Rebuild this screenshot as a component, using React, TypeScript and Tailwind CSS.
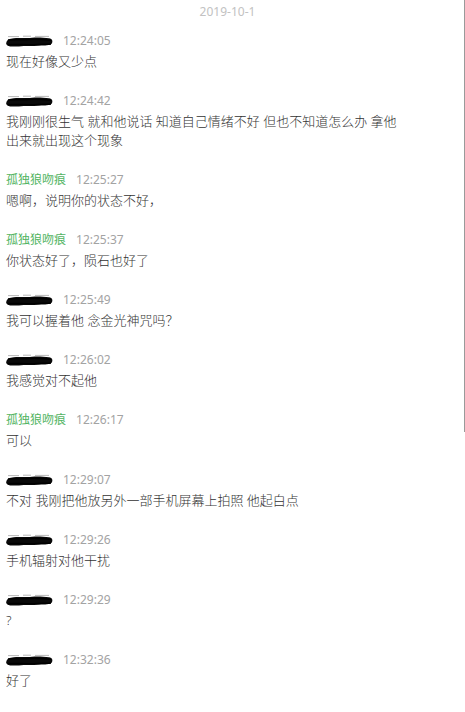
import React from "react";

type Msg = {
  name: string | null; // null = redacted
  time: string;
  lines: string[];
};

const messages: Msg[] = [
  { name: null, time: "12:24:05", lines: ["现在好像又少点"] },
  {
    name: null,
    time: "12:24:42",
    lines: ["我刚刚很生气 就和他说话 知道自己情绪不好 但也不知道怎么办 拿他", "出来就出现这个现象"],
  },
  { name: "孤独狼吻痕", time: "12:25:27", lines: ["嗯啊，说明你的状态不好，"] },
  { name: "孤独狼吻痕", time: "12:25:37", lines: ["你状态好了，陨石也好了"] },
  { name: null, time: "12:25:49", lines: ["我可以握着他 念金光神咒吗？"] },
  { name: null, time: "12:26:02", lines: ["我感觉对不起他"] },
  { name: "孤独狼吻痕", time: "12:26:17", lines: ["可以"] },
  { name: null, time: "12:29:07", lines: ["不对 我刚把他放另外一部手机屏幕上拍照 他起白点"] },
  { name: null, time: "12:29:26", lines: ["手机辐射对他干扰"] },
  { name: null, time: "12:29:29", lines: ["?"] },
  { name: null, time: "12:32:36", lines: ["好了"] },
];

// scribbled-out nickname
function Redacted() {
  return (
    <svg width="48" height="14" viewBox="0 0 48 14" className="shrink-0">
      <path d="M3 2.6 H14 M18 2.2 H26 M30 2.4 H44" stroke="#b0b0b0" strokeWidth="0.9" />
      <path
        d="M1.5 8 C2.5 4.6 8 4.2 13 4 C18 3.6 22 4.4 27 3.8 C33 3.2 39 3.9 44 4.2 C47.5 4.6 48 7.5 46.8 9.6 C45 11.8 40 11.4 34 11.8 C27 12.3 20 11.9 14 12.4 C9 12.8 4 12.6 2.4 11.4 C0.8 10.4 1 9.2 1.5 8 Z"
        fill="#0a0a0a"
      />
      <path d="M3 6 C10 5 16 6.4 24 5.4 C32 4.8 40 5.6 46 6.2" stroke="#000" strokeWidth="1.6" fill="none" />
      <path d="M3 10.6 C12 10 22 11.2 32 10.4 C38 10 43 10.4 46 10" stroke="#000" strokeWidth="1.4" fill="none" />
    </svg>
  );
}

export default function App() {
  return (
    <div
      className="relative w-[465px] h-[712px] overflow-hidden bg-white"
      style={{ fontFamily: '"Noto Sans", "Noto Sans CJK SC", sans-serif' }}
    >
      <div className="pr-[10px] h-[24px] leading-[24px] text-center text-[12px] text-[#c2c2c2]">2019-10-1</div>

      <div className="pt-[6px] pl-[6px]">
        {messages.map((m, i) => (
          <div key={i} className="mb-[19px]">
            <div className="flex items-center h-[22px] text-[12px]">
              {m.name ? (
                <span className="text-[#52b462] mr-[10px]">{m.name}</span>
              ) : (
                <span className="mr-[10px] -ml-[1px] flex items-center">
                  <Redacted />
                </span>
              )}
              <span className="text-[#a3a3a3]">{m.time}</span>
            </div>
            {m.lines.map((l, j) => (
              <div key={j} className="text-[13px] leading-[19px] font-light text-[#333333] whitespace-nowrap">
                {l}
              </div>
            ))}
          </div>
        ))}
      </div>

      {/* overlay scrollbar thumb */}
      <div className="absolute right-0 top-0 w-[1.5px] h-[432px] bg-[#9a9a9a]" />
    </div>
  );
}
